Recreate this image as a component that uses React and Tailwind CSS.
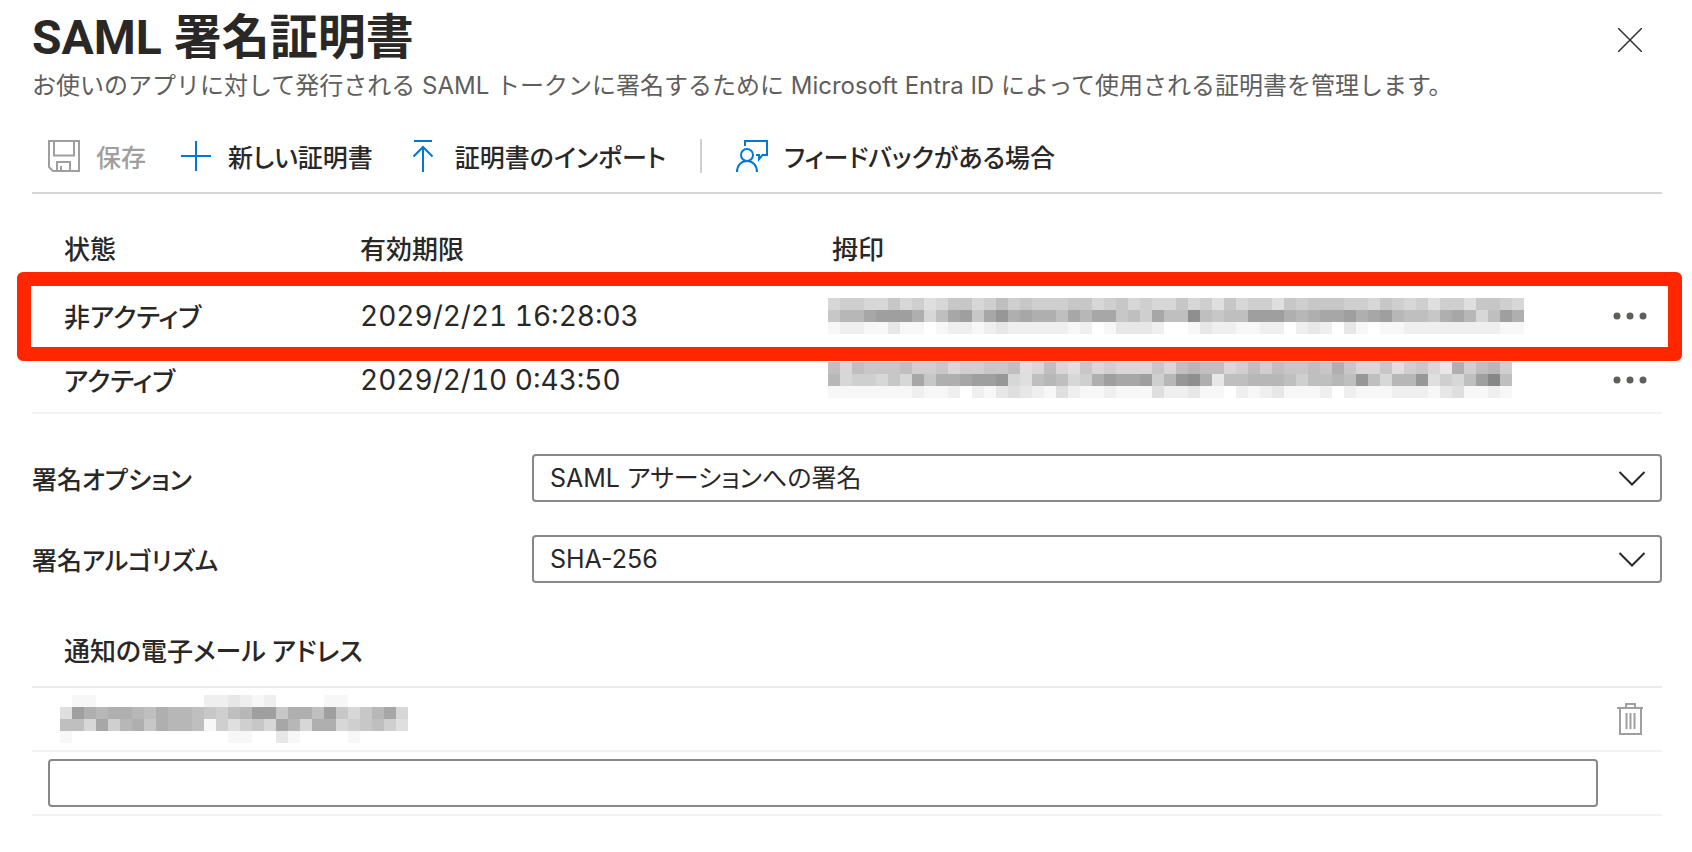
// One character per cell, 0 (white) to f (darkest)
const MASKED_FIRST = [
  "5665575645775686766677567565575647566476777665765646647765",
  "799bccca58bc7bdabaa8b9bb786b88e8788ccca9abbcabc9887ab958ca",
  "1221131101221232222212013332001322112202320310112222222211",
];

const MASKED_SECOND = [
  "858777866756677845854756555758988568687787a755746753a6896",
  "9566575b7aabccd5489856acbbc69dea388999868898d8599d4658cf8",
  "111111121120213432142112111422311021231112021112221341121",
];

const MASKED_EMAIL = [
  "01100000000022321200001100000",
  "4ca9aa98a9987689cc7aa8c7579b5",
  "885b69a7a998164675b95aa567864",
  "10000000000000110031000010000",
];

const CELL = 12;

const Mosaic = ({ rows, label }) => (
  <svg
    role="img"
    aria-label={label}
    width={rows[0].length * CELL}
    height={rows.length * CELL}
    shapeRendering="crispEdges"
    className="block"
  >
    {rows.map((row, y) =>
      row.split("").map((level, x) => {
        const gray = 255 - parseInt(level, 16) * 8;
        return (
          <rect
            key={`${x}-${y}`}
            x={x * CELL}
            y={y * CELL}
            width={CELL}
            height={CELL}
            fill={`rgb(${gray},${gray},${gray})`}
          />
        );
      })
    )}
  </svg>
);

const Icon = ({ className = "", size = 32, children }) => (
  <svg
    width={size}
    height={size}
    viewBox={`0 0 ${size} ${size}`}
    fill="none"
    stroke="currentColor"
    strokeWidth="2"
    aria-hidden="true"
    className={`shrink-0 ${className}`}
  >
    {children}
  </svg>
);

const SaveIcon = () => (
  <Icon className="text-[#a19f9d]">
    <path d="M1 1h30v30H5l-4-4z" />
    <path d="M6 1v14.500h20V1M9 31v-9h13v9M13 31v-5" />
  </Icon>
);

const PlusIcon = () => (
  <Icon className="text-[#0078d4]">
    <path d="M16 1v30M1 16h30" />
  </Icon>
);

const ImportIcon = () => (
  <Icon className="text-[#0078d4]">
    <path d="M7 1h18M16 7v25M6.500 16.500 16 7l9.500 9.500" />
  </Icon>
);

const FeedbackIcon = () => (
  <Icon className="text-[#0078d4]">
    <circle cx="11" cy="15" r="6" />
    <path d="M1 32c0-6.500 4-11 10-11s10 4.500 10 11" />
    <path d="M9 6V1h22v14h-4.500L23 19v-4h-3" />
  </Icon>
);

const TrashIcon = () => (
  <Icon className="text-[#a19f9d]">
    <path d="M3 5h26M12 5V1h9v4M6 5v26h21V5M12.500 10v16M16.500 10v16M20.500 10v16" />
  </Icon>
);

const ToolbarButton = ({ icon, label, disabled }) => (
  <button
    type="button"
    disabled={disabled}
    className="flex items-center gap-4 whitespace-nowrap text-[25px] font-medium disabled:text-[#a19f9d]"
  >
    {icon}
    {label}
  </button>
);

const MoreButton = () => (
  <button type="button" aria-label="その他" className="flex w-16 justify-center py-2 text-[#605e5c]">
    <svg width="34" height="8" viewBox="0 0 34 8" fill="currentColor" aria-hidden="true">
      <circle cx="4" cy="4" r="3.500" />
      <circle cx="17" cy="4" r="3.500" />
      <circle cx="30" cy="4" r="3.500" />
    </svg>
  </button>
);

const SelectField = ({ id, label, options }) => (
  <div className="grid grid-cols-[500px_1fr] items-center text-[25px]">
    <label htmlFor={id} className="font-medium">
      {label}
    </label>
    <div className="relative">
      <select
        id={id}
        className="block h-12 w-full appearance-none rounded border-2 border-[#8a8886] bg-white px-4 font-['Inter','Noto_Sans_CJK_JP',sans-serif]"
      >
        {options.map((option) => (
          <option key={option}>{option}</option>
        ))}
      </select>
      <svg
        width="28"
        height="16"
        viewBox="0 0 28 16"
        fill="none"
        stroke="currentColor"
        strokeWidth="2"
        aria-hidden="true"
        className="pointer-events-none absolute top-4 right-4"
      >
        <path d="M1.500 2 14 14.500 26.500 2" />
      </svg>
    </div>
  </div>
);

const certificates = [
  {
    status: "非アクティブ",
    expires: "2029/2/21 16:28:03",
    mask: MASKED_FIRST,
    highlighted: true,
  },
  {
    status: "アクティブ",
    expires: "2029/2/10 0:43:50",
    mask: MASKED_SECOND,
  },
];

const CertificateTable = () => (
  <div className="mt-[18px] border-b-2 border-[#f3f2f1]">
    <table className="w-full table-fixed border-separate border-spacing-0 text-left">
      <colgroup>
        <col className="w-[328px]" />
        <col className="w-[468px]" />
        <col />
        <col className="w-16" />
      </colgroup>
      <thead>
        <tr className="h-18">
          <th className="p-0 pl-8 font-medium">状態</th>
          <th className="p-0 font-medium">有効期限</th>
          <th className="p-0 pl-1 font-medium">拇印</th>
          <td className="p-0" />
        </tr>
      </thead>
      <tbody>
        {certificates.map(({ status, expires, mask, highlighted }) => (
          <tr key={expires} className="relative h-16">
            <td className="p-0 pl-8 font-medium">{status}</td>
            <td className="p-0 font-['Inter',sans-serif] text-[28px] tabular-nums [font-feature-settings:normal]">
              {expires}
            </td>
            <td className="p-0">
              <Mosaic rows={mask} label="拇印" />
            </td>
            <td className="p-0">
              <MoreButton />
              {highlighted && (
                <span className="pointer-events-none absolute -top-3 -right-5 -bottom-[13px] -left-[15px] rounded-md border-14 border-[#ff2600]" />
              )}
            </td>
          </tr>
        ))}
      </tbody>
    </table>
  </div>
);

const NotificationEmails = () => (
  <section className="mt-[31px]">
    <h2 className="flex h-18 items-center pl-8 font-medium">
      <label htmlFor="notify-email">通知の電子メール アドレス</label>
    </h2>
    <div className="flex h-[66px] items-center justify-between border-y-2 border-t-[#edebe9] border-b-[#f3f2f1] pl-7">
      <Mosaic rows={MASKED_EMAIL} label="電子メール" />
      <button type="button" aria-label="削除" className="flex w-16 justify-center">
        <TrashIcon />
      </button>
    </div>
    <div className="flex h-16 items-center border-b-2 border-[#f3f2f1] pr-16 pl-4">
      <input
        id="notify-email"
        type="email"
        className="h-12 w-full rounded border-2 border-[#8a8886] px-4"
      />
    </div>
  </section>
);

export default function App() {
  return (
    <main className="bg-white pt-[10px] pr-[30px] pb-9 pl-8 font-['Noto_Sans_CJK_JP',sans-serif] text-[26px] leading-9 text-[#292827] [font-feature-settings:'palt']">
      <header className="flex items-start justify-between">
        <div>
          <h1 className="font-['Roboto','Noto_Sans_CJK_JP',sans-serif] text-[48px] leading-14 font-bold">
            SAML 署名証明書
          </h1>
          <p className="font-['Inter','Noto_Sans_CJK_JP',sans-serif] text-[24px] leading-10 text-[#605e5c] [font-feature-settings:normal]">
            お使いのアプリに対して発行される SAML トークンに署名するために Microsoft Entra ID
            によって使用される証明書を管理します。
          </p>
        </div>
        <button type="button" aria-label="閉じる" className="flex w-16 justify-center pt-[18px]">
          <Icon size={24} className="text-[#323130]">
            <path d="M0 0l24 24M24 0 0 24" strokeWidth="1.500" />
          </Icon>
        </button>
      </header>

      <div
        role="toolbar"
        className="mt-[14px] flex h-[74px] items-center gap-[34px] border-b-2 border-[#d6d6d6] pl-4"
      >
        <ToolbarButton icon={<SaveIcon />} label="保存" disabled />
        <ToolbarButton icon={<PlusIcon />} label="新しい証明書" />
        <ToolbarButton icon={<ImportIcon />} label="証明書のインポート" />
        <span className="h-[34px] w-0.5 bg-[#d2d0ce]" />
        <ToolbarButton icon={<FeedbackIcon />} label="フィードバックがある場合" />
      </div>

      <CertificateTable />

      <div className="mt-10 flex flex-col gap-[33px]">
        <SelectField id="signing-option" label="署名オプション" options={["SAML アサーションへの署名"]} />
        <SelectField id="signing-algorithm" label="署名アルゴリズム" options={["SHA-256"]} />
      </div>

      <NotificationEmails />
    </main>
  );
}
